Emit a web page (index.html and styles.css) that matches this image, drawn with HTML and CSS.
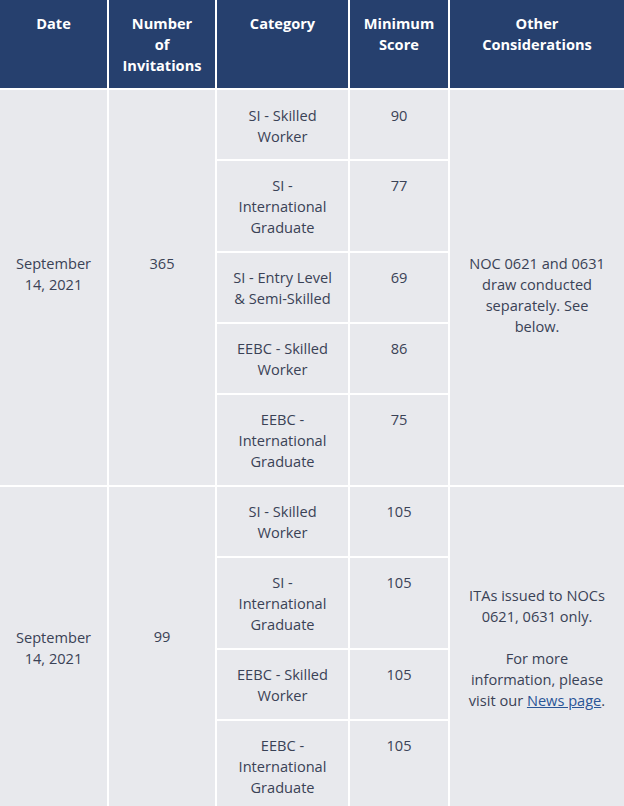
FILE: index.html
```
<!DOCTYPE html>
<html lang="en">
<head>
<meta charset="utf-8">
<title>Draw results</title>
<link rel="stylesheet" href="styles.css">
</head>
<body>
<table class="draws">
  <colgroup>
    <col class="c-date">
    <col class="c-num">
    <col class="c-cat">
    <col class="c-score">
    <col class="c-other">
  </colgroup>
  <thead>
    <tr>
      <th>Date</th>
      <th>Number<br>of<br>Invitations</th>
      <th>Category</th>
      <th>Minimum Score</th>
      <th class="h-other">Other Considerations</th>
    </tr>
  </thead>
  <tbody>
    <tr class="first-row">
      <td rowspan="5" class="span span-date-1">September 14, 2021</td>
      <td rowspan="5" class="span span-num-1">365</td>
      <td>SI - Skilled Worker</td>
      <td>90</td>
      <td rowspan="5" class="span other span-other-1">NOC 0621 and 0631 draw conducted separately. See below.</td>
    </tr>
    <tr>
      <td>SI - International Graduate</td>
      <td>77</td>
    </tr>
    <tr>
      <td>SI - Entry Level &amp; Semi-Skilled</td>
      <td>69</td>
    </tr>
    <tr>
      <td>EEBC - Skilled Worker</td>
      <td>86</td>
    </tr>
    <tr>
      <td>EEBC - International Graduate</td>
      <td>75</td>
    </tr>
    <tr>
      <td rowspan="4" class="span span-date-2">September 14, 2021</td>
      <td rowspan="4" class="span span-num-2">99</td>
      <td>SI - Skilled Worker</td>
      <td>105</td>
      <td rowspan="4" class="span other span-other-2">
        <p class="note">ITAs issued to NOCs 0621, 0631 only.</p>
        <p class="note">For more information, please visit our <a href="#" class="link">News page</a>.</p>
      </td>
    </tr>
    <tr>
      <td>SI - International Graduate</td>
      <td>105</td>
    </tr>
    <tr>
      <td>EEBC - Skilled Worker</td>
      <td>105</td>
    </tr>
    <tr>
      <td>EEBC - International Graduate</td>
      <td>105</td>
    </tr>
  </tbody>
</table>
</body>
</html>
```
FILE: styles.css
```
html, body {
  margin: 0;
  padding: 0;
  background: #e8e9ed;
}

body {
  font-family: "Open Sans", "Noto Sans", sans-serif;
  font-size: 14.6px;
  line-height: 21px;
  color: #3a4256;
}

.draws {
  width: 624px;
  border-collapse: collapse;
  border-style: hidden;
  table-layout: fixed;
}

.c-date { width: 108px; }
.c-num { width: 108px; }
.c-cat { width: 133px; }
.c-score { width: 100px; }
.c-other { width: 175px; }

.draws th,
.draws td {
  border: 2px solid #ffffff;
  text-align: center;
}

.draws th {
  background: #26406e;
  color: #ffffff;
  font-weight: 700;
  vertical-align: top;
  padding: 13px 12px 12px;
}

.draws th.h-other {
  padding-left: 15px;
  padding-right: 15px;
}

.draws td {
  background: #e8e9ed;
  vertical-align: top;
  padding: 14px 14px 13px;
}

.draws .first-row td {
  padding-top: 15px;
  padding-bottom: 12px;
}

.draws td.other {
  padding-left: 15px;
  padding-right: 15px;
}

.draws td.span {
  vertical-align: middle;
}

.draws .first-row td.span-date-1 {
  padding-top: 14px;
  padding-bottom: 42px;
}

.draws .first-row td.span-num-1 {
  padding-top: 14px;
  padding-bottom: 63px;
}

.draws .first-row td.span-other-1 {
  padding-top: 26px;
  padding-bottom: 12px;
}

.draws td.span-date-2,
.draws td.span-other-2 {
  padding-top: 12px;
  padding-bottom: 15px;
}

.draws td.span-num-2 {
  padding-top: 12px;
  padding-bottom: 37px;
}

.note {
  margin: 0 0 21px;
}

.note:last-child {
  margin-bottom: 0;
}

.link {
  color: #2a5597;
  text-decoration: underline;
}
```
